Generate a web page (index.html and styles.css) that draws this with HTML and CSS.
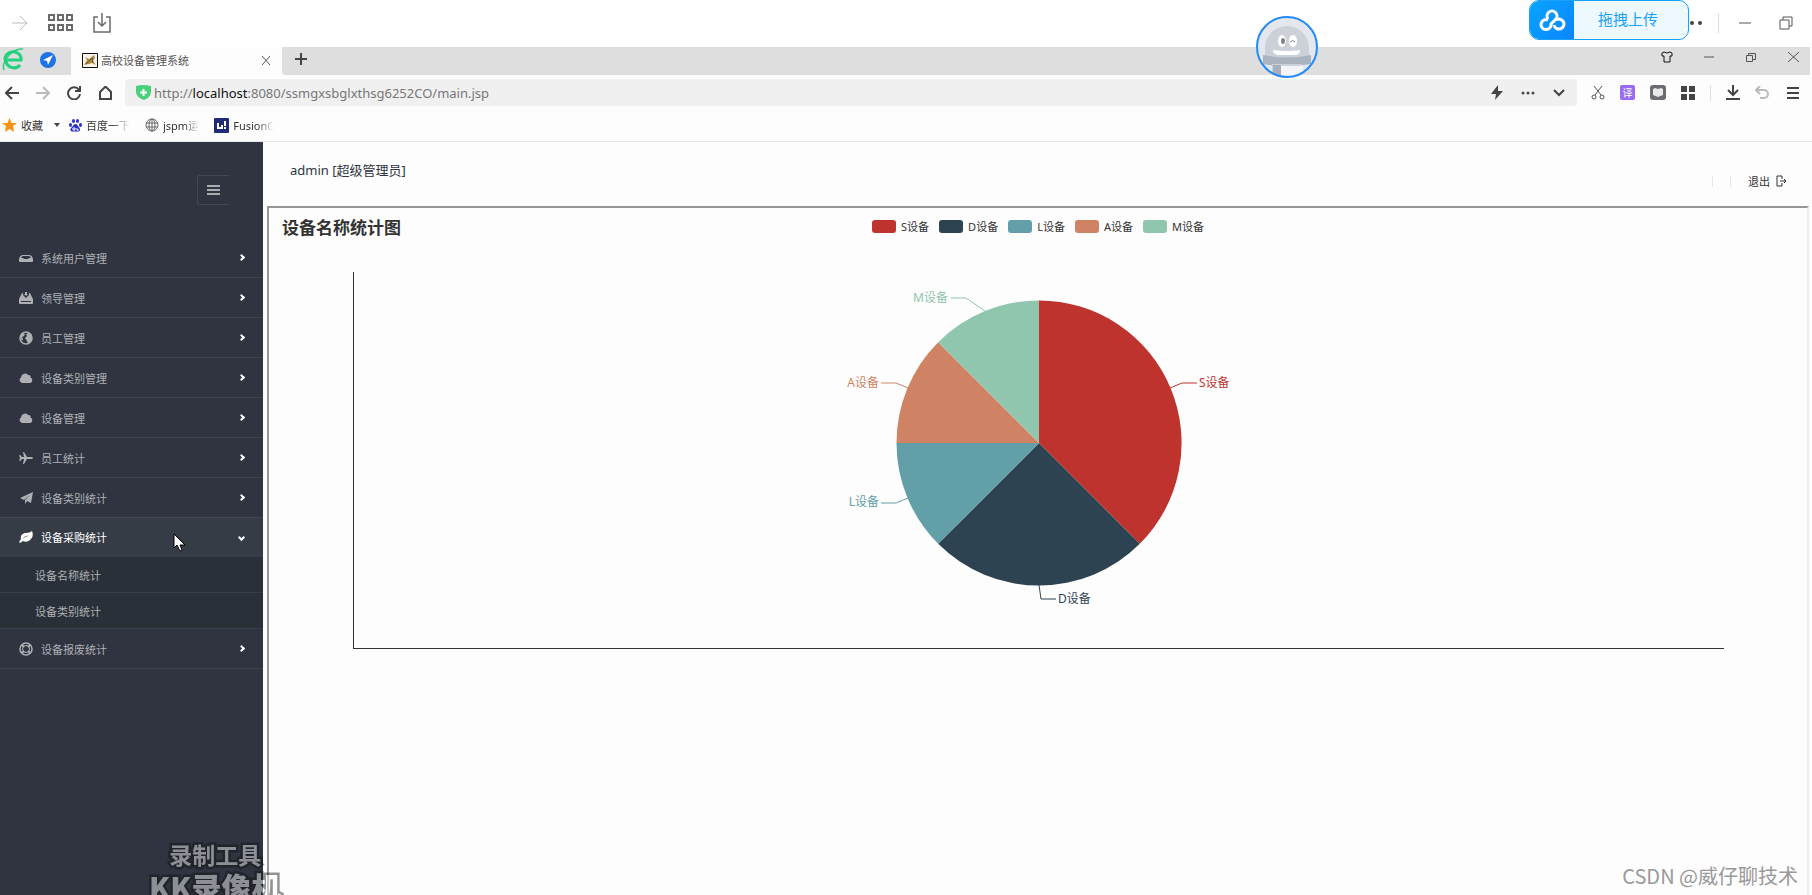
FILE: index.html
```
<!DOCTYPE html>
<html lang="zh-CN">
<head>
<meta charset="utf-8">
<title>高校设备管理系统</title>
<link rel="stylesheet" href="styles.css">
</head>
<body>
<header class="hostbar">
  <button class="ib" aria-label="前进"><svg class="faint" width="18" height="18" viewBox="0 0 18 18"><path d="M1 9h15M9 2l7 7-7 7"/></svg></button>
  <button class="ib grid-btn" aria-label="应用"><svg width="26" height="18" viewBox="0 0 26 18"><path d="M1 1h5v5H1zM10 1h5v5h-5zM19 1h5v5h-5zM1 11h5v5H1zM10 11h5v5h-5zM19 11h5v5h-5z"/></svg></button>
  <button class="ib" aria-label="保存"><svg class="thin" width="18" height="20" viewBox="0 0 18 20"><path d="M5 4H1v15h16V4h-4M9 0v13M5 9l4 4 4-4"/></svg></button>
  <div class="spacer"></div>
  <button class="upload"><span class="cloud"><svg width="28" height="24" viewBox="0 0 28 24"><path d="M10 11A5 5 0 1 1 18 11L13 16A5 5 0 1 1 10 12M16 17A5 5 0 1 0 18 12"/></svg></span><span class="upload-text">拖拽上传</span></button>
  <div class="hostctl">
    <button class="ib" aria-label="更多"><svg width="14" height="6" viewBox="0 0 14 6"><g class="solid"><circle cx="3" cy="3" r="2"/><circle cx="11" cy="3" r="2"/></g></svg></button>
    <span class="bar"></span>
    <button class="ib min" aria-label="最小化"><svg width="12" height="2" viewBox="0 0 12 2"><path d="M0 1h12"/></svg></button>
    <button class="ib" aria-label="还原"><svg width="14" height="14" viewBox="0 0 14 14"><path d="M1 4h9v9H1zM4 4V1h9v9h-3"/></svg></button>
  </div>
  <svg class="robot" width="64" height="64" viewBox="0 0 64 64" aria-hidden="true">
    <defs><clipPath id="rc"><circle cx="32" cy="32" r="30"/></clipPath></defs>
    <circle cx="32" cy="32" r="30" fill="#e4e7ed"/>
    <g clip-path="url(#rc)"><path d="M10 45V33a22 22 0 0 1 44 0v12z" fill="#cbd0d9"/><path d="M8 40q24 5 48 0v9q-24 4-48 0z" fill="#aab3c0"/><path d="M17 49h30v15H17z" fill="#cbd2dc"/><path d="M26 51h22v13H26z" fill="#f3f5f8"/><path d="M18 50h8v12h-8z" fill="#a5afbe"/>
    <ellipse cx="27" cy="26" rx="4" ry="6" fill="#fff"/><ellipse cx="38" cy="26" rx="4" ry="6" fill="#fff"/><ellipse cx="28" cy="26" rx="2" ry="3" fill="#7d8490"/><path d="M35 27q3-3 5 0" stroke="#7d8490" fill="none"/><path d="M18 35q14 2 27 0 1 5-6 5H25q-7 0-7-5z" fill="#fff"/></g>
    <circle cx="32" cy="32" r="30" fill="none" stroke="#2489f5" stroke-width="2"/>
  </svg>
</header>

<div class="tabs">
  <svg class="elogo" width="23" height="24" viewBox="0 0 23 24"><path d="M4 13h16a8 7 0 1 0-15 2c2 6 10 8 14 3" fill="none" stroke="#20d17e" stroke-width="3"/><path d="M3 23C0 15 11 1 22 2" fill="none" stroke="#20d17e" stroke-width="1.500"/></svg>
  <svg class="nav" width="16" height="16" viewBox="0 0 16 16"><circle cx="8" cy="8" r="8" fill="#1c72e8"/><path d="M13 3L3 8l4 1 1 4z" fill="#fff"/></svg>
  <div class="tab">
    <svg width="16" height="15" viewBox="0 0 16 15"><path d="M.5.5h15v14H.5z" fill="#f7f3ea" stroke="#111"/><path d="M2 12l3-5-2-3 4 2 5-4 1 3-2 3 3 4-4-2-3 1z" fill="#b08b42"/><path d="M4 11l6-6 1 5" fill="none" stroke="#66543a"/></svg>
    <span class="tab-title">高校设备管理系统</span>
    <button class="ib" aria-label="关闭标签页"><svg width="8" height="9" viewBox="0 0 8 9"><path d="M0 0l8 9M8 0L0 9"/></svg></button>
  </div>
  <div class="strip">
    <button class="ib" aria-label="新标签页"><svg class="bold" width="12" height="12" viewBox="0 0 12 12"><path d="M6 0v12M0 6h12"/></svg></button>
    <div class="winctl">
      <button class="ib" aria-label="皮肤"><svg class="black" width="12" height="12" viewBox="0 0 12 12"><path d="M3 1L1 2v3h2v6h6V5h2V2L9 1Q6 3 3 1z"/></svg></button>
      <button class="ib" aria-label="最小化"><svg width="10" height="2" viewBox="0 0 10 2"><path d="M0 1h10"/></svg></button>
      <button class="ib" aria-label="还原"><svg width="12" height="11" viewBox="0 0 12 11"><path d="M1.500 3.500h6v6h-6zM3.500 3.500v-2h7v6h-3"/></svg></button>
      <button class="ib" aria-label="关闭"><svg width="11" height="10" viewBox="0 0 11 10"><path d="M0 0l11 10M11 0L0 10"/></svg></button>
    </div>
  </div>
</div>

<div class="toolbar">
  <div class="navs">
    <button class="ib" aria-label="后退"><svg class="bold" width="15" height="14" viewBox="0 0 15 14"><path d="M14 7H1M7 1L1 7l6 6"/></svg></button>
    <button class="ib" aria-label="前进"><svg class="bold faint" width="15" height="14" viewBox="0 0 15 14"><path d="M0 7h13M7 1l6 6-6 6"/></svg></button>
    <button class="ib" aria-label="刷新"><svg class="bold" width="15" height="14" viewBox="0 0 15 14"><path d="M12 4a6 6 0 1 0 1 4M13 0v5H8"/></svg></button>
    <button class="ib" aria-label="主页"><svg class="bold" width="15" height="14" viewBox="0 0 15 14"><path d="M2 6l5-5h1l5 5v7H2z"/></svg></button>
  </div>
  <div class="address">
    <svg width="15" height="15" viewBox="0 0 15 15"><path d="M0 1q7-2 15 0v6q0 5-7 8Q0 12 0 7z" fill="#4ad07c"/><path d="M7.500 4v7M4 7.500h7" stroke="#fff" stroke-width="2"/></svg>
    <span class="url">http://<b>localhost</b>:8080/ssmgxsbglxthsg6252CO/main.jsp</span>
    <button class="ib" aria-label="极速模式"><svg width="12" height="15" viewBox="0 0 12 15"><path class="solid" d="M7 0L0 9h5l-1 6 8-9H7z"/></svg></button>
    <button class="ib more" aria-label="更多"><svg width="14" height="4" viewBox="0 0 14 4"><g class="solid"><circle cx="2" cy="2" r="1.500"/><circle cx="7" cy="2" r="1.500"/><circle cx="12" cy="2" r="1.500"/></g></svg></button>
    <button class="ib" aria-label="展开"><svg class="bold" width="12" height="8" viewBox="0 0 12 8"><path d="M1 1l5 5 5-5"/></svg></button>
  </div>
  <div class="tools">
    <button class="ib" aria-label="截图"><svg width="14" height="14" viewBox="0 0 14 14"><path d="M3 0l7 9M11 0L4 9"/><circle cx="3" cy="11" r="2"/><circle cx="11" cy="11" r="2"/></svg></button>
    <button class="ib trans">译</button>
    <button class="ib" aria-label="阅读"><svg width="16" height="15" viewBox="0 0 16 15"><g stroke="none"><rect width="16" height="15" rx="3" fill="#6b6d73"/><path d="M3 4l2-1 3 1 3-1 2 1v6l-5 2-5-2z" fill="#e9e9ea"/></g></svg></button>
    <button class="ib" aria-label="扩展"><svg width="14" height="14" viewBox="0 0 14 14"><path class="solid" d="M0 0h6v6H0zM8 0h6v6H8zM0 8h6v6H0zM8 8h6v6H8z"/></svg></button>
    <span class="bar"></span>
    <button class="ib" aria-label="下载"><svg class="bold" width="14" height="15" viewBox="0 0 14 15"><path d="M7 0v10M2 5l5 5 5-5M0 14h14"/></svg></button>
    <button class="ib" aria-label="撤销"><svg class="bold faint" width="14" height="13" viewBox="0 0 14 13"><path d="M5 0L1 4l4 4M1 4h8a4 4 0 0 1 0 8H5"/></svg></button>
    <button class="ib burger" aria-label="菜单"><svg class="bold" width="12" height="12" viewBox="0 0 12 12"><path d="M0 1h12M0 6h12M0 11h12"/></svg></button>
  </div>
</div>

<nav class="bookmarks">
  <a class="mark fav" href="#"><svg width="15" height="14" viewBox="0 0 15 14"><path d="M7.500 0l2 5H15l-4 3 1 6-4.500-3L3 14l1-6-4-3h5.500z" fill="#f8930e"/></svg><span>收藏</span><svg class="caret" width="6" height="4" viewBox="0 0 6 4"><path d="M0 0h6L3 4z" fill="#444"/></svg></a>
  <a class="mark" href="#"><svg width="13" height="13" viewBox="0 0 13 13"><g fill="#2a2fd0"><ellipse cx="1.500" cy="6" rx="1.500" ry="2"/><ellipse cx="4.500" cy="2" rx="1.500" ry="2"/><ellipse cx="8.500" cy="2" rx="1.500" ry="2"/><ellipse cx="11.500" cy="6" rx="1.500" ry="2"/><path d="M6.500 5c2 0 3 3 4 4 2 3-1 4-4 3.500C3 13 0 12 2 9c2-1 2-4 4.500-4z"/></g><path d="M4 9h2v2H4zM8 9v2h2" fill="none" stroke="#fff"/></svg><span class="fade">百度一下</span></a>
  <a class="mark" href="#"><svg class="globe" width="14" height="14" viewBox="0 0 14 14"><circle cx="7" cy="7" r="6"/><ellipse cx="7" cy="7" rx="3" ry="6"/><path d="M7 1v12M1 5h12M1 9h12"/></svg><span class="fade">jspm运</span></a>
  <a class="mark" href="#"><svg width="15" height="15" viewBox="0 0 15 15"><rect width="15" height="15" rx="1" fill="#202a78"/><path d="M4 5v5h4V7M11 3v5M11 9v2" fill="none" stroke="#fff" stroke-width="2"/></svg><span class="fade">FusionC</span></a>
</nav>

<div class="app">
  <aside class="sidebar">
    <button class="toggle" aria-label="折叠菜单"><svg width="13" height="11" viewBox="0 0 13 11"><path d="M0 1h13M0 5h13M0 9h13" stroke="#aaabae" stroke-width="2"/></svg></button>
    <ul class="menu">
      <li><a href="#"><svg class="mi" viewBox="0 0 14 14"><path fill-rule="evenodd" d="M0 8q1-4 4-4h6q3 0 4 4v2q0 1-1 1H1q-1 0-1-1zM2 7h2l1 1h4l1-1h2q-1-2-2-2H4Q3 5 2 7z"/></svg><span>系统用户管理</span><i class="chev"></i></a></li>
      <li><a href="#"><svg class="mi" viewBox="0 0 14 14"><path fill-rule="evenodd" d="M3 2h1v2l3 3 3-3V2h1l3 6v4q0 1-1 1H1q-1 0-1-1V8zM2 10v1h10v-1zM6 1h2v2h1L7 5 5 3h1z"/></svg><span>领导管理</span><i class="chev"></i></a></li>
      <li><a href="#"><svg class="mi" viewBox="0 0 14 14"><circle cx="7" cy="7" r="6" fill="none" stroke="currentColor" stroke-width="1.500"/><path d="M1 5l3-3 2 1-1 2-2 1 1 2-1 2zM7 3l3-1 3 4-1 4-3 3-1-3-2-3 2-2z"/></svg><span>员工管理</span><i class="chev"></i></a></li>
      <li><a href="#"><svg class="mi" viewBox="0 0 14 14"><path d="M3 12a3 3 0 0 1-1-5.500 4 4 0 0 1 7-2.500 2 2 0 0 1 2.500 2.500A3 3 0 0 1 11.500 12z"/></svg><span>设备类别管理</span><i class="chev"></i></a></li>
      <li><a href="#"><svg class="mi" viewBox="0 0 14 14"><path d="M3 12a3 3 0 0 1-1-5.500 4 4 0 0 1 7-2.500 2 2 0 0 1 2.500 2.500A3 3 0 0 1 11.500 12z"/></svg><span>设备管理</span><i class="chev"></i></a></li>
      <li><a href="#"><svg class="mi" viewBox="0 0 14 14"><path d="M14 7q0 1-2 1H8l-3 5H4l1-5H3L1 10H0l1-3-1-3h1l2 2h2L4 1h1l3 5h4q2 0 2 1z"/></svg><span>员工统计</span><i class="chev"></i></a></li>
      <li><a href="#"><svg class="mi" viewBox="0 0 14 14"><path d="M14 1l-2 11-4-2-2 3V9l5-5-6 5-4-2z"/></svg><span>设备类别统计</span><i class="chev"></i></a></li>
      <li><a class="active" href="#"><svg class="mi" viewBox="0 0 14 14"><path fill-rule="evenodd" d="M0 12l2-3C1 5 4 3 7 3q4 0 6-2 2 5-1 8-3 4-8 2l-3 2zM4 9q2-3 6-3-4-1-6 3z"/></svg><span>设备采购统计</span><i class="chev down"></i></a>
        <ul class="sub"><li><a href="#">设备名称统计</a></li><li><a href="#">设备类别统计</a></li></ul></li>
      <li><a href="#"><svg class="mi" viewBox="0 0 14 14"><g fill="none" stroke="currentColor"><circle cx="7" cy="7" r="6" stroke-width="1.500"/><circle cx="7" cy="7" r="3.500"/><path d="M3 3l2 2M11 3L9 5M3 11l2-2M11 11L9 9" stroke-width="2"/></g></svg><span>设备报废统计</span><i class="chev"></i></a></li>
    </ul>
    <svg class="cursor" width="13" height="19" viewBox="0 0 13 19"><path d="M1 1v14l3-3 3 6 2-1-2-5h5z" fill="#fff" stroke="#000"/></svg>
  </aside>
  <main class="content">
    <div class="userbar">
      <span class="who">admin [超级管理员]</span>
      <span class="bar"></span><span class="bar"></span>
      <a class="logout" href="#">退出 <svg width="11" height="12" viewBox="0 0 11 12"><path d="M6 1H1v10h5M6 1v3M6 8v3M4 6h6M8 4l2 2-2 2" /></svg></a>
    </div>
    <section class="frame">
      <div class="charthead">
        <h1>设备名称统计图</h1>
        <ul class="legend"><li class="s">S设备</li><li class="d">D设备</li><li class="l">L设备</li><li class="a">A设备</li><li class="m">M设备</li></ul>
      </div>
      <div class="plot">
        <svg class="pie" width="400" height="340" viewBox="-200 -171 400 340" role="img" aria-label="设备名称统计图">
          <path fill="#be332e" d="M0 0V-142.500A142.500 142.500 0 0 1 100.800 100.800z"/>
          <path fill="#2d4352" d="M0 0L100.800 100.800A142.500 142.500 0 0 1-100.800 100.800z"/>
          <path fill="#629fa8" d="M0 0L-100.800 100.800A142.500 142.500 0 0 1-142.500 0z"/>
          <path fill="#d08364" d="M0 0H-142.500A142.500 142.500 0 0 1-100.800-100.800z"/>
          <path fill="#90c5ae" d="M0 0L-100.800-100.800A142.500 142.500 0 0 1 0-142.500z"/>
          <g fill="none"><path stroke="#be332e" d="M131-55l12-5h15"/><path stroke="#2d4352" d="M0 142l2 14h15"/><path stroke="#629fa8" d="M-131 55l-12 5h-15"/><path stroke="#d08364" d="M-131-55l-12-5h-15"/><path stroke="#90c5ae" d="M-54-132l-19-13h-15"/></g>
          <g class="names"><text x="160" y="-56" fill="#be332e">S设备</text><text x="19" y="160" fill="#2d4352">D设备</text><text class="end" x="-160" y="63" fill="#629fa8">L设备</text><text class="end" x="-160" y="-56" fill="#d08364">A设备</text><text class="end" x="-91" y="-141" fill="#90c5ae">M设备</text></g>
        </svg>
      </div>
    </section>
  </main>
</div>
<div class="kk"><span>录制工具</span><strong>KK录像机</strong></div>
<div class="csdn">CSDN @威仔聊技术</div>
</body>
</html>
```
FILE: styles.css
```
* { box-sizing: border-box; }
html, body { height: 100%; }
body {
  margin: 0;
  display: flex;
  flex-direction: column;
  position: relative;
  overflow: hidden;
  background: #fdfdfd;
  color: #333;
  font-family: "Noto Sans", "Noto Sans CJK SC", sans-serif;
  font-size: 11px;
}
ul { list-style: none; margin: 0; padding: 0; }
a { color: inherit; text-decoration: none; }
svg { flex: none; display: block; }
.ib {
  display: flex;
  align-items: center;
  justify-content: center;
  padding: 0;
  border: 0;
  background: none;
  font: inherit;
}
.ib svg { fill: none; stroke: #555; stroke-width: 1; }
.ib svg.bold { stroke: #444; stroke-width: 2; }
.ib svg.faint { stroke: #bbb; }
.ib svg.black { stroke: #111; }
.ib .solid { fill: #444; stroke: none; }
.spacer { flex: 1; }
.bar { width: 1px; background: #ddd; }

.hostbar {
  flex: none;
  position: relative;
  display: flex;
  align-items: center;
  height: 47px;
  padding: 0 0 2px 11px;
  background: #fff;
}
.hostbar > .ib svg { stroke: #6a6a6a; stroke-width: 2; }
.hostbar > .ib svg.thin { stroke-width: 1.5; }
.hostbar > .ib svg.faint { stroke: #bbb; stroke-width: 1; }
.grid-btn { margin: 0 19px; }
.upload {
  align-self: flex-start;
  display: flex;
  width: 160px;
  height: 40px;
  padding: 0;
  overflow: hidden;
  border: 1px solid #1ba0fb;
  border-radius: 10px;
  background: #edf8ff;
  color: #1aa2fa;
  font: inherit;
  font-size: 15px;
}
.cloud { display: grid; place-items: center; width: 44px; height: 100%; background: linear-gradient(135deg, #08a4ff, #0a86fc); }
.cloud svg { fill: none; stroke: #fff; stroke-width: 3; }
.upload-text { flex: 1; align-self: center; padding: 0 6px 4px 0; }
.hostctl { display: flex; align-items: center; padding-right: 19px; }
.hostctl .bar { height: 20px; margin: 0 20px 0 15px; }
.hostctl .min { margin-right: 28px; }
.robot { position: absolute; right: 493px; top: 15px; z-index: 2; }

.tabs { flex: none; display: flex; height: 28px; padding-right: 2px; background: linear-gradient(90deg, #dedede 71px, #fdfdfd 71px); }
.elogo { margin-left: 1px; }
.nav { margin: 5px 15px 0 16px; }
.tab { display: flex; align-items: center; width: 211px; padding: 0 12px 2px 11px; background: #fdfdfd; }
.tab-title { flex: 1; padding-left: 3px; white-space: nowrap; color: #555; }
.strip { flex: 1; display: flex; justify-content: space-between; padding: 0 11px 4px 13px; background: #dedede; border-radius: 0 0 0 3px; }
.winctl { display: flex; gap: 31px; align-items: center; height: 20px; }

.toolbar { flex: none; display: flex; align-items: center; height: 35px; padding-right: 13px; }
.navs { display: flex; gap: 16px; padding: 0 12px 0 5px; }
.address { flex: 1; display: flex; align-items: center; gap: 17px; height: 27px; padding: 0 12px 0 11px; background: #f0f0f0; border-radius: 4px; }
.address .more { margin: 0 1px; }
.url { flex: 1; margin-left: -14px; color: #777; font-size: 13px; white-space: nowrap; }
.url b { color: #111; font-weight: 400; }
.tools { display: flex; align-items: center; gap: 15px; padding-left: 14px; }
.tools .bar { height: 16px; }
.tools .burger { margin-left: 3px; }
.trans { width: 15px; height: 15px; border-radius: 2px; background: #9a6cf3; color: #fff; font-size: 10px; line-height: 14px; }

.bookmarks { flex: none; display: flex; align-items: center; gap: 15px; height: 32px; padding: 0 2px 1px; border-bottom: 1px solid #e8e8e8; }
.mark { display: flex; align-items: center; gap: 4px; white-space: nowrap; }
.fav { margin-right: -6px; }
.caret { margin-left: 7px; }
.fade { mask-image: linear-gradient(90deg, #000 60%, transparent); }
.globe { fill: none; stroke: #666; }

.app { flex: 1; min-height: 0; display: flex; }
.sidebar { position: relative; flex: none; width: 263px; padding-top: 33px; background: #2f3440; color: #aeb0b4; }
.toggle { display: flex; align-items: center; justify-content: center; width: 32px; height: 30px; margin: 0 34px 33px auto; padding: 0; border: 1px solid #444652; border-right: 0; border-radius: 2px 0 0 2px; background: none; }
.menu > li > a { display: flex; align-items: center; height: 40px; padding: 0 16px 0 19px; border-bottom: 1px solid #42454f; }
.mi { width: 14px; height: 14px; margin-right: 8px; fill: currentColor; }
.menu > li > a span { flex: 1; }
.chev { width: 5px; height: 5px; margin-right: 3px; border: solid #fff; border-width: 2px 2px 0 0; transform: rotate(45deg); }
.chev.down { transform: rotate(135deg); }
.menu > li > a.active { height: 39px; background: #363c46; border-bottom-color: #363c46; color: #fff; }
.sub { background: #2a3038; }
.sub a { display: flex; align-items: center; height: 36px; padding-left: 35px; border-bottom: 1px solid #3a3f49; }
.cursor { position: absolute; left: 173px; top: 391px; }

.content { flex: 1; min-width: 0; display: flex; flex-direction: column; padding: 0 3px 0 4px; }
.userbar { flex: none; display: flex; align-items: center; gap: 17px; height: 64px; padding: 14px 22px 0 23px; }
.userbar .bar { height: 11px; background: #e8e8e8; }
.who { flex: 1; align-self: flex-start; margin-top: -4px; line-height: 36px; font-size: 13px; color: #2f3440; }
.logout { display: flex; align-items: center; gap: 6px; }
.logout svg { fill: none; stroke: #333; }
.frame { flex: 1; border: solid #969696; border-width: 2px 0 0 2px; border-right: 2px solid #ededed; }
.charthead { display: grid; grid-template-columns: 1fr auto 1fr; height: 64px; padding: 5px 13px; }
h1 { margin: 0; font-size: 17px; line-height: 30px; }
.legend { display: flex; gap: 10px; height: 27px; line-height: 27px; font-size: 11px; }
.legend li { display: flex; align-items: center; gap: 5px; }
.legend li::before { content: ""; width: 24px; height: 13px; border-radius: 3px; background: currentColor; }
.legend .s::before { background: #be332e; }
.legend .d::before { background: #2d4352; }
.legend .l::before { background: #629fa8; }
.legend .a::before { background: #d08364; }
.legend .m::before { background: #90c5ae; }
.plot { display: flex; justify-content: center; height: 377px; margin: 0 83px 0 84px; border: solid #333; border-width: 0 0 1px 1px; }
.pie { overflow: visible; }
.names { font-size: 12px; }
.end { text-anchor: end; }

.kk { position: absolute; left: 149px; bottom: -8px; z-index: 3; display: flex; flex-direction: column; align-items: center; opacity: .45; color: #fff; font-family: "Noto Sans CJK SC", sans-serif; font-weight: 700; font-size: 23px; line-height: 29px; -webkit-text-stroke: 5px #111; paint-order: stroke fill; }
.kk strong { font-size: 30px; line-height: 34px; }
.csdn { position: absolute; right: 14px; bottom: 4px; color: #999; font-family: "Noto Sans CJK SC", sans-serif; font-size: 20px; line-height: 30px; text-shadow: -1px -1px #fff; }
```
